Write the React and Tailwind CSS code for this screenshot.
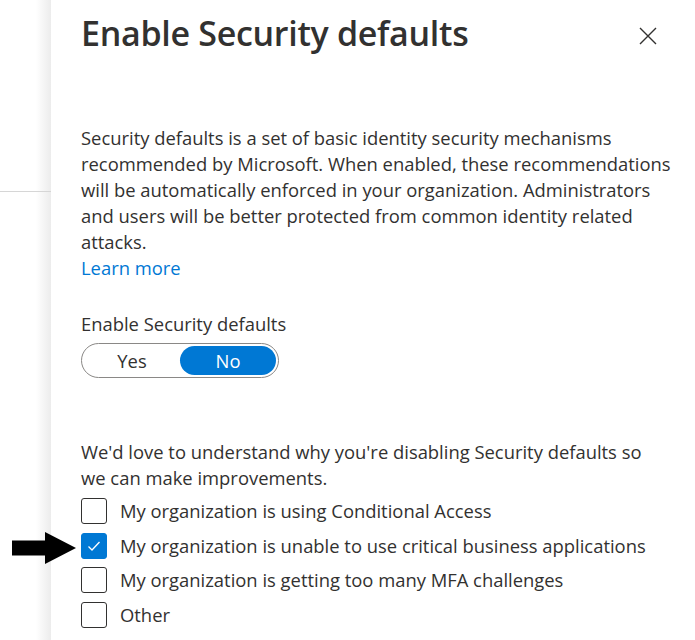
import React, { useState } from "react";

const reasons = [
  "My organization is using Conditional Access",
  "My organization is unable to use critical business applications",
  "My organization is getting too many MFA challenges",
  "Other",
];

function CheckBox({ checked }) {
  return (
    <div
      className={`w-[26px] h-[26px] rounded-[3px] flex items-center justify-center shrink-0 ${
        checked ? "bg-[#0078d4] border border-[#0078d4]" : "border border-[#323130] bg-white"
      }`}
    >
      {checked && (
        <svg width="16" height="16" viewBox="0 0 16 16" fill="none">
          <path d="M2.5 8.5l3.5 3.5 7.5-8" stroke="white" strokeWidth="1.3" />
        </svg>
      )}
    </div>
  );
}

export default function App() {
  const [enabled, setEnabled] = useState(false);
  const [checked, setChecked] = useState([false, true, false, false]);

  return (
    <div
      className="w-[695px] h-[640px] flex overflow-hidden bg-white text-[#323130]"
      style={{ fontFamily: '"Open Sans", "Noto Sans", sans-serif' }}
    >
      {/* page behind the blade */}
      <div className="w-[51px] shrink-0 relative bg-gradient-to-r from-white from-70% to-[#ececec]">
        <div className="mt-[191px] h-px bg-[#d6d6d6]" />
        {/* pointer arrow */}
        <svg className="absolute left-[12px] top-[531px]" width="66" height="34" viewBox="0 0 66 34">
          <path d="M0 9.5h33V1l31 16-31 16v-8.5H0z" fill="black" />
        </svg>
      </div>

      <div className="flex-1 pl-[30px] pr-[10px]">
        <div className="flex items-start justify-between pt-[11px]">
          <h1 className="text-[34px] leading-[44px] font-semibold tracking-[-0.3px] text-[#323130]">
            Enable Security defaults
          </h1>
          <button className="mt-[16px] mr-[28px]" title="close">
            <svg width="18" height="18" viewBox="0 0 18 18">
              <path d="M1 1l16 16M17 1L1 17" stroke="#323130" strokeWidth="1.4" />
            </svg>
          </button>
        </div>

        <p className="mt-[70px] text-[18.4px] leading-[26px] whitespace-nowrap">
          Security defaults is a set of basic identity security mechanisms
          <br />
          recommended by Microsoft. When enabled, these recommendations
          <br />
          will be automatically enforced in your organization. Administrators
          <br />
          and users will be better protected from common identity related
          <br />
          attacks.
        </p>
        <a className="block text-[18.4px] leading-[26px] text-[#0078d4]" href="#">
          Learn more
        </a>

        <div className="mt-[30px] text-[18.4px] leading-[26px]">Enable Security defaults</div>
        <div className="mt-[6px] w-[198px] h-[35px] rounded-full border border-[#8a8886] p-[2px] flex text-[18.4px]">
          <button
            onClick={() => setEnabled(true)}
            className={`flex-1 rounded-full ${enabled ? "bg-[#0078d4] text-white" : "text-[#323130]"}`}
          >
            Yes
          </button>
          <button
            onClick={() => setEnabled(false)}
            className={`flex-1 rounded-full ${!enabled ? "bg-[#0078d4] text-white" : "text-[#323130]"}`}
          >
            No
          </button>
        </div>

        <p className="mt-[61px] text-[18.4px] leading-[26px] whitespace-nowrap">
          We'd love to understand why you're disabling Security defaults so
          <br />
          we can make improvements.
        </p>
        <div className="mt-[7px] flex flex-col gap-[8.5px]">
          {reasons.map((r, i) => (
            <label
              key={r}
              className="flex items-center gap-[13px] cursor-pointer text-[18.4px] leading-[26px]"
              onClick={() => setChecked(checked.map((c, j) => (j === i ? !c : c)))}
            >
              <CheckBox checked={checked[i]} />
              <span className="whitespace-nowrap">{r}</span>
            </label>
          ))}
        </div>
      </div>
    </div>
  );
}
